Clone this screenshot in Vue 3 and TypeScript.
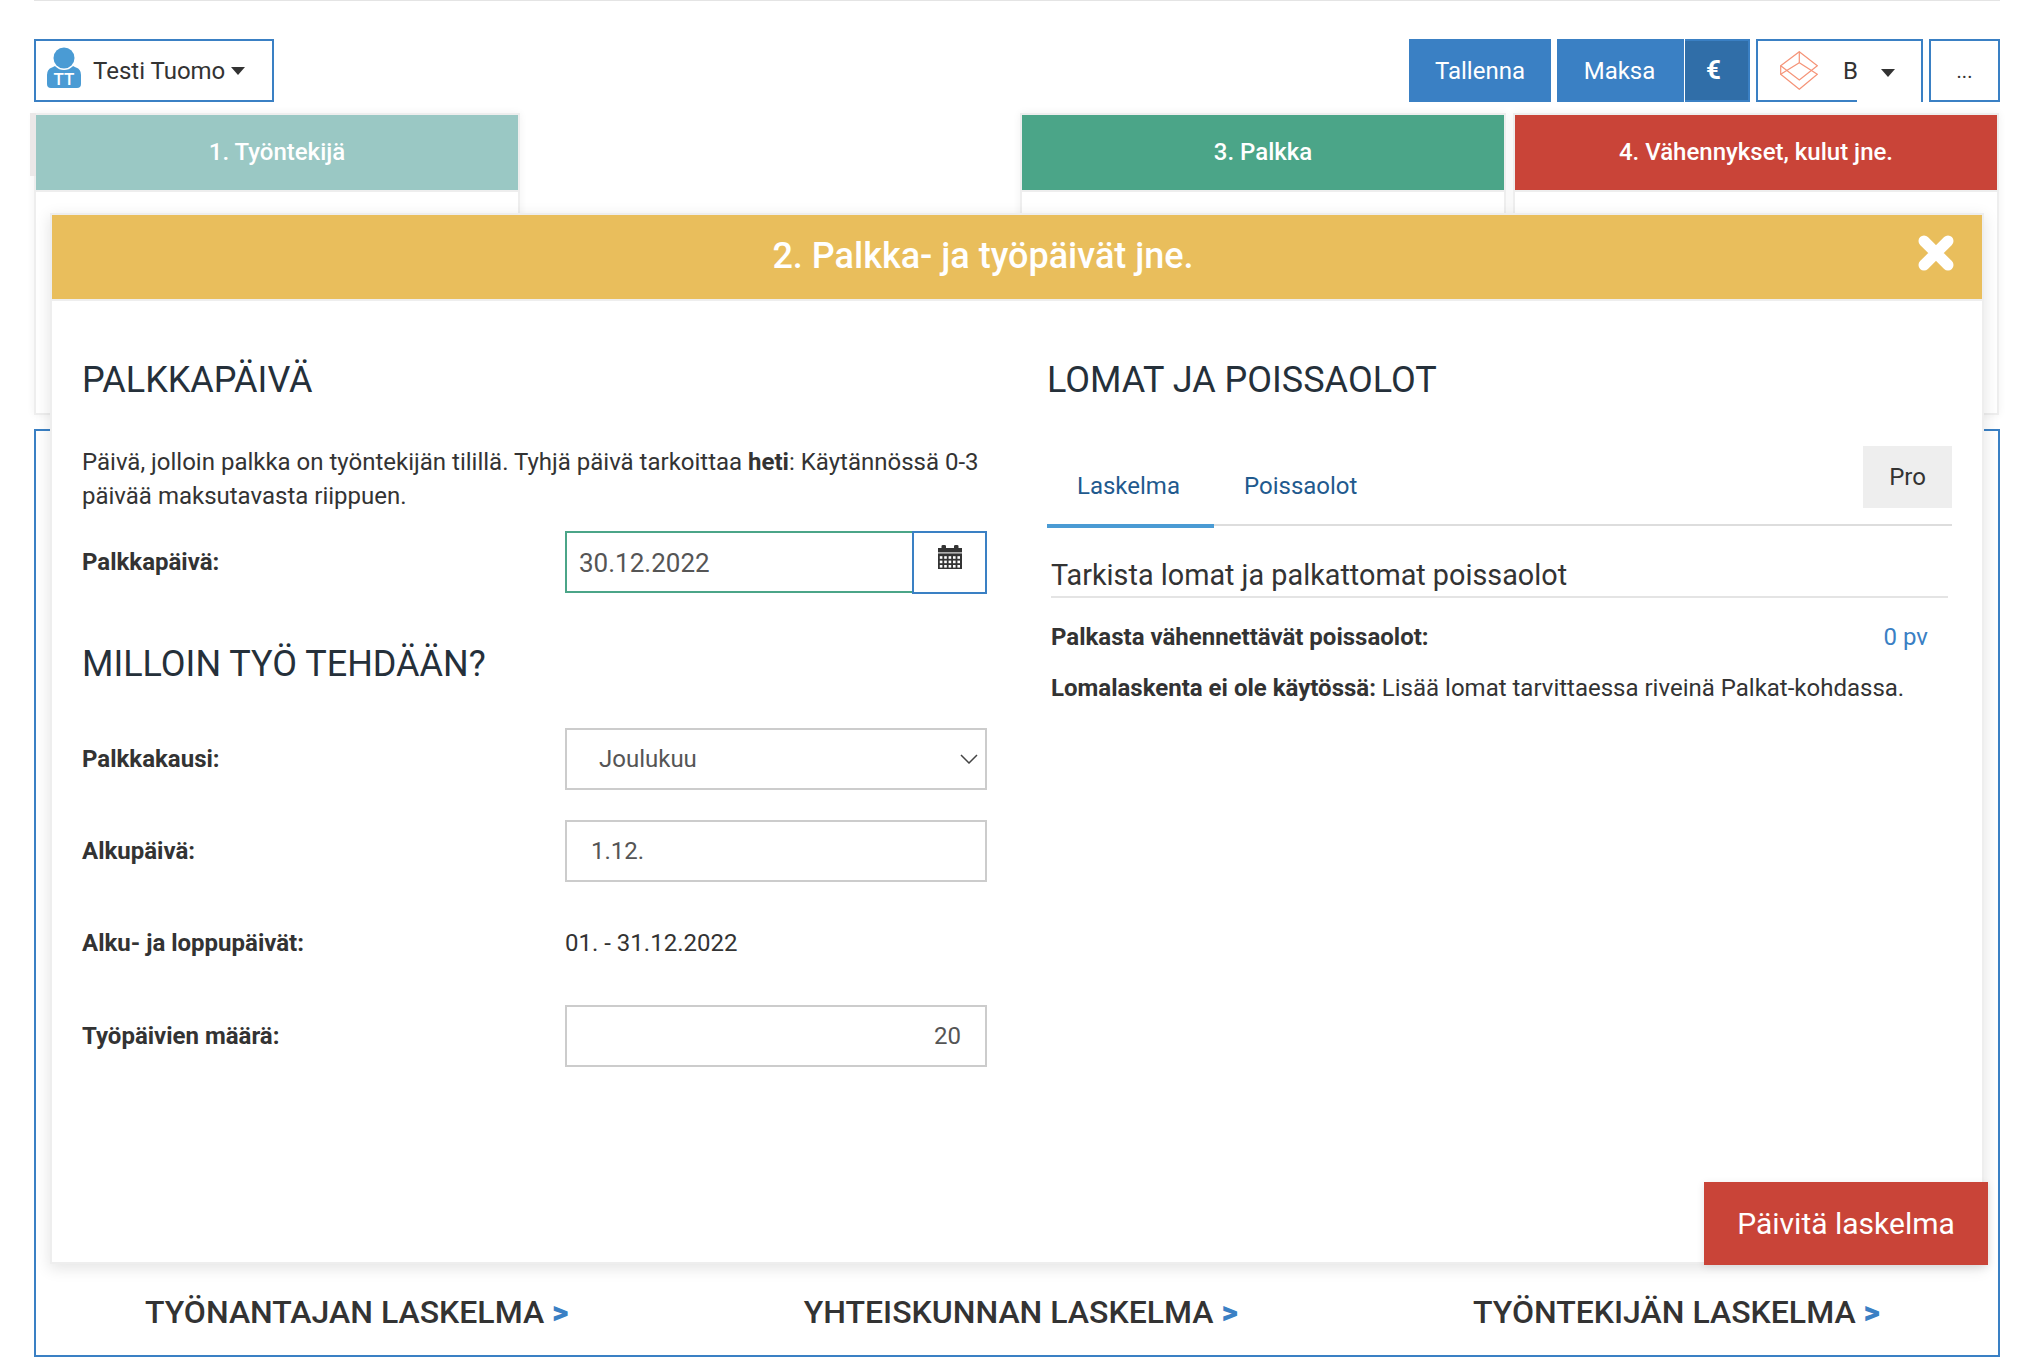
<script setup lang="ts">
interface Card {
  title: string
  color: string
}

const cards: Card[] = [
  { title: '1. Työntekijä', color: '#9ac8c4' },
  { title: '', color: '' },
  { title: '3. Palkka', color: '#4ba588' },
  { title: '4. Vähennykset, kulut jne.', color: '#c94438' },
]

const links = ['TYÖNANTAJAN LASKELMA', 'YHTEISKUNNAN LASKELMA', 'TYÖNTEKIJÄN LASKELMA']
</script>

<template>
  <div class="page">
    <div class="toolbar">
      <button class="btn-outline user">
        <svg class="avatar" width="36" height="42" viewBox="0 0 36 42">
          <path d="M1 37 V28 Q1 22 6 20.5 L11 18 H25 L30 20.5 Q35 22 35 28 V37 Q35 41 31 41 H5 Q1 41 1 37 Z" fill="#4a9bd4" />
          <circle cx="18" cy="11" r="12" fill="#fff" />
          <circle cx="18" cy="11" r="10.5" fill="#4a9bd4" />
          <text x="18" y="38" text-anchor="middle" class="avatar-text">TT</text>
        </svg>
        <span>Testi Tuomo</span>
        <i class="caret"></i>
      </button>
      <div class="spacer"></div>
      <button class="btn-solid save">Tallenna</button>
      <div class="pay">
        <button class="btn-solid pay-main">Maksa</button>
        <button class="pay-euro">€</button>
      </div>
      <button class="btn-outline company">
        <svg width="38" height="39" viewBox="0 0 38 39" fill="none" stroke="#f59478" stroke-width="1.2">
          <path d="M19.3 .7 L37.3 14.7 L19.3 29 L.7 14.7 Z" />
          <path d="M.7 23.3 L19.3 11.7 L37.3 23.3 L19.3 38.3 Z" />
          <path d="M19.3 .7 V11.7 M.7 14.7 V23.3" />
        </svg>
        <span class="company-name">B</span>
        <i class="caret small"></i>
        <span class="company-gap"></span>
      </button>
      <button class="btn-outline more">...</button>
    </div>

    <div class="cards">
      <div v-for="(card, i) in cards" :key="i" :class="['card', { 'card-empty': !card.title, 'card-first': i === 0 }]">
        <template v-if="card.title">
          <div class="card-head" :style="{ background: card.color }">{{ card.title }}</div>
        </template>
      </div>
    </div>

    <div class="frame">
      <a v-for="link in links" :key="link" class="result-link">{{ link }} <b>&gt;</b></a>
    </div>

    <section class="modal">
      <header class="modal-head">
        <span>2. Palkka- ja työpäivät jne.</span>
        <svg class="close" width="38" height="38" viewBox="0 0 38 38">
          <path d="M7 7 L31 31 M31 7 L7 31" stroke="#fff" stroke-width="11" stroke-linecap="round" />
        </svg>
      </header>
      <div class="modal-body">
        <div class="col-left">
          <h2>PALKKAPÄIVÄ</h2>
          <p class="intro">
            Päivä, jolloin palkka on työntekijän tilillä. Tyhjä päivä tarkoittaa <b>heti</b>: Käytännössä 0-3
            päivää maksutavasta riippuen.
          </p>
          <div class="row first-row">
            <label>Palkkapäivä:</label>
            <div class="date">
              <div class="date-input">30.12.2022</div>
              <button class="date-btn">
                <svg width="24" height="24" viewBox="0 0 24 24">
                  <path d="M0 3 H3.5 V1 Q3.5 0 5 0 H6.5 Q8 0 8 1 V3 H16 V1 Q16 0 17.5 0 H19 Q20.5 0 20.5 1 V3 H24 V24 H0 Z" fill="#333" />
                  <rect x="0" y="7.4" width="24" height="1" fill="#fff" />
                  <g fill="#fff">
                    <template v-for="y in [11.2, 15.6, 20]" :key="y">
                      <rect v-for="x in [1.8, 6.2, 10.6, 15, 19.4]" :key="x" :x="x" :y="y" width="2.6" height="2.6" />
                    </template>
                  </g>
                </svg>
              </button>
            </div>
          </div>
          <h2 class="h-second">MILLOIN TYÖ TEHDÄÄN?</h2>
          <div class="row period-row">
            <label>Palkkakausi:</label>
            <div class="field select">
              <span>Joulukuu</span>
              <svg width="18" height="10" viewBox="0 0 18 10" fill="none" stroke="#444" stroke-width="1.5">
                <path d="M1 1 L9 9 L17 1" />
              </svg>
            </div>
          </div>
          <div class="row">
            <label>Alkupäivä:</label>
            <div class="field">1.12.</div>
          </div>
          <div class="row">
            <label>Alku- ja loppupäivät:</label>
            <div class="plain">01. - 31.12.2022</div>
          </div>
          <div class="row last-row">
            <label>Työpäivien määrä:</label>
            <div class="field right">20</div>
          </div>
        </div>
        <div class="col-right">
          <h2>LOMAT JA POISSAOLOT</h2>
          <div class="tabs">
            <div class="tab active">Laskelma</div>
            <div class="tab">Poissaolot</div>
            <button class="pro">Pro</button>
          </div>
          <div class="panel">
            <h3>Tarkista lomat ja palkattomat poissaolot</h3>
            <div class="absence">
              <b>Palkasta vähennettävät poissaolot:</b>
              <span class="days">0 pv</span>
            </div>
            <p class="holiday"><b>Lomalaskenta ei ole käytössä:</b> Lisää lomat tarvittaessa riveinä Palkat-kohdassa.</p>
          </div>
        </div>
      </div>
      <button class="update">Päivitä laskelma</button>
    </section>
  </div>
</template>

<style scoped>
.page {
  position: relative;
  width: 2028px;
  height: 1368px;
  box-sizing: border-box;
  padding: 0 28px 0 34px;
  overflow: hidden;
  font-family: Roboto, "Liberation Sans", sans-serif;
  font-size: 24px;
  color: #333;
  background: #fff;
}

button {
  font-family: inherit;
  cursor: pointer;
}

.toolbar {
  display: flex;
  align-items: flex-start;
  height: 115px;
  padding-top: 38px;
  box-sizing: border-box;
  border-top: 1px solid #e4e4e4;
}

.spacer {
  flex: 1;
}

.btn-outline {
  display: flex;
  align-items: center;
  height: 63px;
  box-sizing: border-box;
  padding: 0;
  border: 2px solid #3a80c4;
  background: #fff;
  color: #333;
  font-size: 24px;
}

.btn-solid {
  height: 63px;
  border: 0;
  background: #3a80c4;
  color: #fff;
  font-size: 24px;
}

.user {
  width: 240px;
  padding-left: 10px;
}

.avatar {
  margin: -6px 11px 0 0;
}

.avatar-text {
  font-size: 17px;
  font-weight: 500;
  fill: #fff;
}

.caret {
  display: inline-block;
  margin-left: 6px;
  border-top: 8px solid #333;
  border-left: 7px solid transparent;
  border-right: 7px solid transparent;
}

.caret.small {
  margin: 5px 0 0 23px;
}

.save {
  width: 142px;
  margin-right: 6px;
}

.pay {
  display: flex;
  width: 193px;
  height: 63px;
  margin-right: 6px;
}

.pay-main {
  width: 128px;
  padding-right: 8px;
  border-right: 1px solid #fff;
}

.pay-euro {
  flex: 1;
  border: 2px solid #3a80c4;
  border-left: 0;
  background: #306ea8;
  color: #fff;
  font-size: 26px;
  font-weight: 700;
  padding: 0 6px 2px 0;
}

.company {
  position: relative;
  width: 167px;
  padding-left: 22px;
}

.company-name {
  margin-left: 25px;
}

.company-gap {
  position: absolute;
  left: 99px;
  bottom: -2px;
  width: 64px;
  height: 2px;
  background: #fff;
}

.more {
  justify-content: center;
  width: 71px;
  margin-left: 6px;
  font-size: 20px;
}

.cards {
  display: grid;
  grid-template-columns: repeat(4, 482px);
  column-gap: 11px;
  height: 298px;
  margin-left: 2px;
}

.card {
  position: relative;
  box-sizing: border-box;
  height: 298px;
  background: #fff;
  box-shadow: 0 0 0 2px #eee, 0 0 8px 2px rgba(0, 0, 0, 0.06);
}

.card-empty {
  visibility: hidden;
}

.card-first::before {
  content: '';
  position: absolute;
  left: -6px;
  top: -2px;
  width: 6px;
  height: 63px;
  background: #ebe8e8;
}

.card-head {
  height: 75px;
  border-bottom: 2px solid #eee;
  text-align: center;
  line-height: 74px;
  font-size: 24px;
  font-weight: 500;
  color: #fff;
}

.frame {
  display: flex;
  justify-content: space-between;
  box-sizing: border-box;
  height: 928px;
  margin-top: 16px;
  padding: 859px 118px 0 109px;
  border: 2px solid #3a80c4;
}

.result-link {
  font-size: 32px;
  font-weight: 500;
  line-height: 44px;
  white-space: nowrap;
}

.result-link b {
  color: #3a80c4;
  font-weight: 900;
}

.modal {
  position: absolute;
  left: 52px;
  top: 215px;
  width: 1930px;
  height: 1047px;
  background: #fff;
  box-shadow: 0 0 0 2px #eee, 0 4px 14px 3px rgba(0, 0, 0, 0.1);
}

.modal-head {
  position: relative;
  height: 86px;
  box-sizing: border-box;
  padding-right: 68px;
  border-bottom: 2px solid #eee;
  background: #e9be5c;
  color: #fff;
  font-size: 36px;
  font-weight: 500;
  text-align: center;
  line-height: 82px;
}

.close {
  position: absolute;
  right: 27px;
  top: 19px;
}

.modal-body {
  display: flex;
  padding-top: 57px;
}

.col-left {
  width: 923px;
  margin-left: 30px;
}

.col-right {
  width: 905px;
  margin-left: 42px;
}

h2 {
  margin: 0;
  font-size: 36px;
  font-weight: 400;
  line-height: 44px;
  color: #25303a;
}

.intro {
  width: 900px;
  margin: 43px 0 0;
  line-height: 34px;
}

.row {
  display: flex;
  align-items: center;
  height: 62px;
  margin-top: 30px;
}

.first-row {
  margin-top: 18px;
}

.period-row {
  margin-top: 42px;
}

.last-row {
  margin-top: 31px;
}

.row label {
  width: 483px;
  font-weight: 700;
  white-space: nowrap;
}

.h-second {
  margin-top: 49px;
}

.date {
  display: flex;
  width: 422px;
  height: 62px;
}

.date-input {
  flex: 1;
  box-sizing: border-box;
  height: 62px;
  border: 2px solid #4ba588;
  border-right: 0;
  padding-left: 12px;
  line-height: 60px;
  font-size: 26px;
  color: #555;
}

.date-btn {
  display: flex;
  justify-content: center;
  width: 75px;
  height: 63px;
  box-sizing: border-box;
  padding: 12px 0 0;
  border: 2px solid #3a80c4;
  background: #fff;
}

.field {
  width: 422px;
  height: 62px;
  box-sizing: border-box;
  border: 2px solid #ccc;
  padding: 0 24px;
  line-height: 58px;
  color: #555;
}

.field.right {
  text-align: right;
}

.select {
  display: flex;
  align-items: center;
  justify-content: space-between;
  padding: 0 7px 0 32px;
}

.plain {
  color: #333;
}

.tabs {
  position: relative;
  display: flex;
  height: 80px;
  margin-top: 44px;
  box-sizing: border-box;
  border-bottom: 2px solid #ddd;
}

.tab {
  height: 82px;
  box-sizing: border-box;
  padding: 22px 32px 0 30px;
  line-height: 36px;
  color: #1f5a8e;
  flex-shrink: 0;
}

.tab.active {
  width: 167px;
  padding-right: 0;
  border-bottom: 4px solid #4a9bd4;
}

.pro {
  position: absolute;
  right: 0;
  top: 0;
  width: 89px;
  height: 62px;
  border: 0;
  background: #eee;
  color: #333;
  font-size: 24px;
}

.panel {
  padding: 0 4px;
}

.panel h3 {
  margin: 29px 0 0;
  padding-bottom: 1px;
  border-bottom: 2px solid #e4e4e4;
  font-size: 28.8px;
  font-weight: 400;
  line-height: 40px;
}

.absence {
  display: flex;
  justify-content: space-between;
  margin-top: 23px;
  padding-right: 20px;
  line-height: 32px;
}

.days {
  color: #3a80c4;
}

.holiday {
  margin: 19px 0 0;
  line-height: 32px;
  white-space: nowrap;
}

.update {
  position: absolute;
  right: -6px;
  top: 967px;
  width: 284px;
  height: 83px;
  border: 0;
  background: #c94438;
  color: #fff;
  font-size: 30px;
  box-shadow: 0 2px 8px rgba(0, 0, 0, 0.1);
}
</style>
